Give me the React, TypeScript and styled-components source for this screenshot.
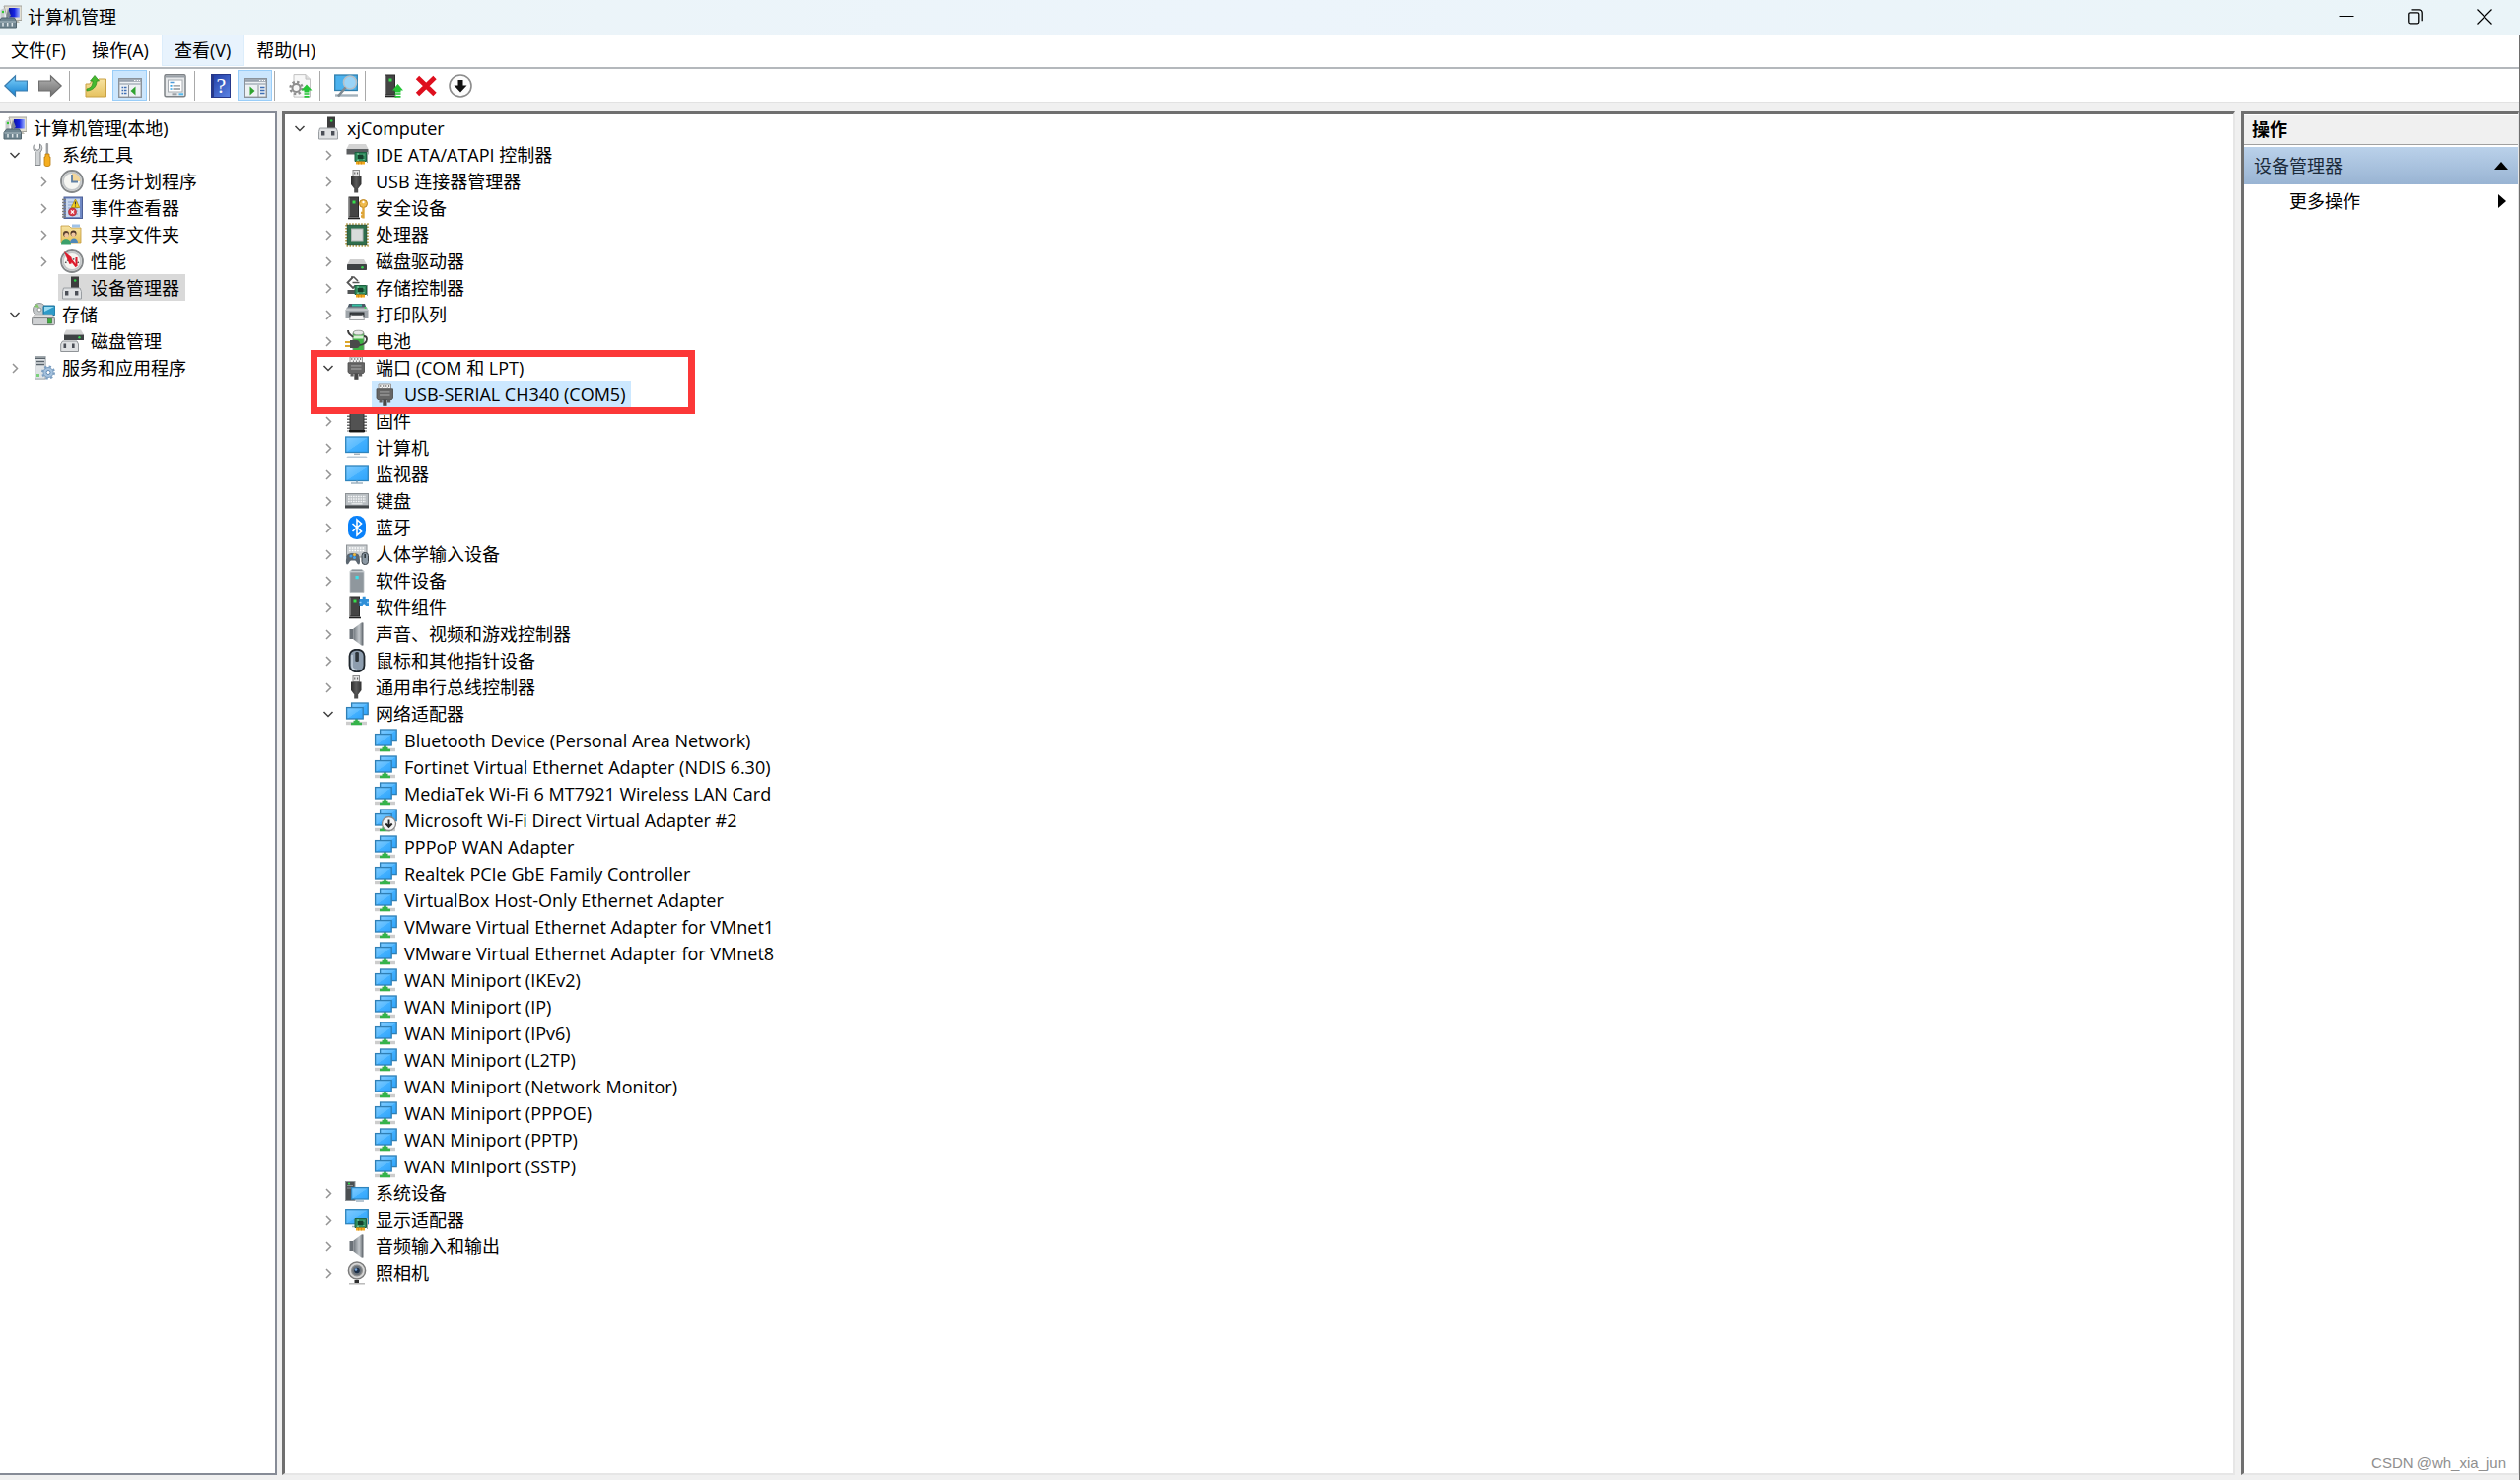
import React from "react";
import styled, { createGlobalStyle, css } from "styled-components";

const GlobalStyle = createGlobalStyle`
  *, *::before, *::after { box-sizing: border-box; }
  html, body { margin: 0; padding: 0; }
  body {
    font-family: "Open Sans", "Noto Sans", "Noto Sans CJK SC", sans-serif;
    font-size: 18px;
    line-height: 26px;
    color: #000;
    background: #f0f0f0;
  }
  button {
    font: inherit;
    color: inherit;
    background: none;
    border: 0;
    padding: 0;
    margin: 0;
    text-align: left;
  }
  svg { display: block; flex: none; }
`;

/* ---------- icons ---------- */

const Svg = styled.svg.attrs({ viewBox: "0 0 24 24", width: 24, height: 24, "aria-hidden": true })``;

const Gradients = styled.svg`
  position: absolute;
  width: 0;
  height: 0;
`;

const Defs = () => (
  <Gradients aria-hidden>
    <defs>
      <linearGradient id="gScreen" x1="0" y1="0" x2="1" y2="1">
        <stop offset="0" stopColor="#7fcaff" />
        <stop offset="0.5" stopColor="#5bbcff" />
        <stop offset="0.52" stopColor="#42b0ff" />
        <stop offset="1" stopColor="#2fa4fb" />
      </linearGradient>
      <linearGradient id="gBack" x1="0" y1="0" x2="0" y2="1">
        <stop offset="0" stopColor="#7fd2fb" />
        <stop offset="1" stopColor="#1580d0" />
      </linearGradient>
      <linearGradient id="gFwd" x1="0" y1="0" x2="0" y2="1">
        <stop offset="0" stopColor="#b5b5b5" />
        <stop offset="1" stopColor="#6f6f6f" />
      </linearGradient>
      <linearGradient id="gDark" x1="0" y1="0" x2="1" y2="0">
        <stop offset="0" stopColor="#2b2b2b" />
        <stop offset="0.5" stopColor="#5a5a5a" />
        <stop offset="1" stopColor="#303030" />
      </linearGradient>
      <linearGradient id="gFolder" x1="0" y1="0" x2="0" y2="1">
        <stop offset="0" stopColor="#f7e3a1" />
        <stop offset="1" stopColor="#e6c25f" />
      </linearGradient>
      <linearGradient id="gSpeaker" x1="0" y1="0" x2="1" y2="0">
        <stop offset="0" stopColor="#70777d" />
        <stop offset="0.6" stopColor="#c3c8cc" />
        <stop offset="1" stopColor="#6b7176" />
      </linearGradient>
      <linearGradient id="gCrt" x1="0" y1="0" x2="1" y2="0">
        <stop offset="0" stopColor="#0a12a8" />
        <stop offset="0.5" stopColor="#1724e0" />
        <stop offset="1" stopColor="#9db2ff" />
      </linearGradient>
    </defs>
  </Gradients>
);

const Card = ({ x = 10, y = 11 }: { x?: number; y?: number }) => (
  <g transform={`translate(${x} ${y})`}>
    <path d="M1 0.5h11.5v9H1z" fill="#2f8a5c" stroke="#1c6140" />
    <path d="M13.5 0v11" stroke="#9aa5a5" />
    <rect x="4" y="3" width="5.5" height="4" fill="#16412c" />
    <path d="M3 2h2M3 8.2h2M10 2.5v1M10 7v1" stroke="#8fd3ab" />
    <rect x="2" y="9.5" width="9" height="3" fill="#f3a81c" />
    <path d="M4.5 9.5v3M7.5 9.5v3" stroke="#c67e10" strokeWidth="0.7" />
  </g>
);

const NetShape = () => (
  <>
    <path d="M1 21.5h21" stroke="#cdcdcd" strokeWidth="3.4" />
    <path d="M11.5 17v3M6 22h11M8.5 20h6" stroke="#35b34a" strokeWidth="2.6" />
    <rect x="6.6" y="1" width="16.6" height="11.6" fill="url(#gScreen)" stroke="#2f7fb5" strokeWidth="1.3" />
    <rect x="1.6" y="5.6" width="16.6" height="11.4" fill="url(#gScreen)" stroke="#2f7fb5" strokeWidth="1.3" />
  </>
);

const UsbShape = () => (
  <>
    <rect x="8" y="0.5" width="6.5" height="6" fill="#e4e4e4" stroke="#8b8b8b" />
    <path d="M9.8 2.5v2M12.6 2.5v2" stroke="#555" />
    <path d="M6 6.5h10.5v8.5l-3 4H9l-3-4z" fill="url(#gDark)" />
    <rect x="9.2" y="18.5" width="4" height="5" fill="#4c4c4c" />
  </>
);

const SerialShape = () => (
  <>
    <path d="M5 1h12.500v6H5z" fill="#f3f3f3" stroke="#9a9a9a" />
    <path d="M6.800 2.200v1.600M9.800 2.200v1.600M12.800 2.200v1.600M15.600 2.200v1.600M8.400 4.600v1.200M11.400 4.600v1.200M14.300 4.600v1.200" stroke="#555" />
    <path d="M3 6.800h16.500V16l-1 1.500h-14.500L3 16z" fill="#666" stroke="#474747" strokeWidth="0.800" />
    <path d="M6 9.800h10.500M6 13h10.500" stroke="#979797" strokeWidth="1.300" />
    <path d="M5.500 17.500h3.200v3H5.500zM14 17.500h3.200v3H14z" fill="#606060" />
    <rect x="9.300" y="17.500" width="4.200" height="6.300" fill="#484848" />
  </>
);

const SpeakerShape = () => (
  <>
    <path d="M4.500 7h4v10h-4z" fill="#6a7177" />
    <path d="M8.500 6.500L16.500 0.500H18v23h-1.500L8.500 17.500z" fill="url(#gSpeaker)" />
    <path d="M18 0.500v23" stroke="#666d73" />
  </>
);

const DriveShape = () => (
  <>
    <path d="M5 10h14l3 5.500H2z" fill="#cfcfcf" />
    <rect x="2" y="15" width="20" height="6" rx="0.8" fill="#3f4244" />
    <circle cx="17.500" cy="18.200" r="1.300" fill="#39d353" />
  </>
);

const TowerShape = ({ x = 3 }: { x?: number }) => (
  <g transform={`translate(${x} 0)`}>
    <rect x="1" y="1" width="9.500" height="20" fill="#444" stroke="#2a2a2a" />
    <path d="M1.500 1.500v19" stroke="#777" />
    <rect x="4.500" y="4.500" width="3" height="3" fill="#35e04b" />
    <path d="M0 22.500h12" stroke="#222" strokeWidth="1.600" />
  </g>
);

const DeviceShape = () => (
  <>
    <rect x="11" y="0.500" width="8" height="12" fill="#3d3d3d" />
    <circle cx="15.200" cy="4.500" r="1.300" fill="#2ed047" />
    <path d="M3.500 12h16.500l1.500 3.500v7.500H2.500v-7.500z" fill="#dfe1e3" stroke="#9a9ea2" />
    <rect x="5" y="15" width="3.400" height="4.500" fill="#4b4f57" />
    <rect x="15" y="15" width="3.400" height="4.500" fill="#4b4f57" />
  </>
);

const ComputerMgmtShape = () => (
  <>
    <path d="M6 1h18v14.500H10z" fill="#e2dfd4" stroke="#a3a39c" />
    <path d="M11 3h11v9.500H11z" fill="url(#gCrt)" />
    <path d="M13 15.500h7l2 2.500H12z" fill="#bdbbb2" />
    <path d="M2.500 5l4-2v10h-4z" fill="#c9ccce" />
    <circle cx="5" cy="7" r="1.200" fill="#31c931" />
    <path d="M10 3l3 8-5 3z" fill="#7e8994" />
    <path d="M3.500 13h13l2 3.500V23H1v-6.500z" fill="#6f8590" stroke="#51646e" />
    <path d="M1.500 17h16.500" stroke="#aebdc4" />
    <path d="M5 18v3.500M9.700 18v3.500M14.300 18v3.500" stroke="#dfe6e9" strokeWidth="1.500" />
  </>
);

const ClockFace = ({ children }: { children?: React.ReactNode }) => (
  <>
    <circle cx="12" cy="12" r="11" fill="#f6f6f2" stroke="#85888a" strokeWidth="1.800" />
    <circle cx="12" cy="12" r="9" fill="none" stroke="#c4c7c9" strokeWidth="1.800" />
    {children}
  </>
);

const consoleWindow = (
  <>
    <rect x="0.700" y="4.700" width="22.600" height="18.600" fill="#eef1f4" stroke="#8b929a" strokeWidth="1.400" />
    <path d="M1 6.500h22" stroke="#98a2ad" strokeWidth="2.600" />
    <path d="M16 6.500h1.500M18.700 6.500h1.500M21 6.500h1" stroke="#fff" strokeWidth="1.200" />
    <path d="M1 10h22" stroke="#a9b2bc" strokeWidth="1.500" />
  </>
);

const shapes: Record<string, React.ReactNode> = {
  mgmt: <ComputerMgmtShape />,
  device: <DeviceShape />,
  tools: (
    <>
      <path d="M3.500 1v4.500l2.500 2 2.500-2V1c2.500 1.200 3.200 5.500 0.500 8v13.500H4V9C1 6.500 1.300 2.500 3.500 1z" fill="#cfd2d4" stroke="#85898c" />
      <path d="M15 0.500h1.600v11H15z" fill="#a9adb0" stroke="#7c8083" strokeWidth="0.600" />
      <path d="M14 11h4v3h1v8c0 2-6 2-6 0v-8h1z" fill="#f5ae1f" stroke="#b87a0d" strokeWidth="0.800" />
    </>
  ),
  clock: (
    <ClockFace>
      <path d="M12 12V3.500A8.500 8.500 0 0 1 20.500 12z" fill="#f3d69a" />
      <path d="M12 5v7.500h6" stroke="#5f7fa3" strokeWidth="1.800" fill="none" />
    </ClockFace>
  ),
  event: (
    <>
      <rect x="4" y="1" width="18.500" height="21.500" fill="#6f88c4" stroke="#4c5f96" />
      <rect x="6" y="2.500" width="14" height="18.500" fill="#c9d8ee" />
      <path d="M8 6h10M8 9h10M8 12h10M8 15h10M8 18h10" stroke="#8ba3cf" />
      <path d="M2 3.500h4M2 6.500h4M2 9.500h4M2 12.500h4M2 15.500h4M2 18.500h4M2 21h4" stroke="#7b7b7b" strokeWidth="1.500" />
      <path d="M15.500 3l4.300 8.500h-8.600z" fill="#f6d21c" stroke="#a88c0d" strokeWidth="0.800" />
      <path d="M15.500 5.500v3M15.500 9.500v1" stroke="#333" strokeWidth="1.200" />
      <circle cx="12.500" cy="16" r="4" fill="#db3c4a" stroke="#a82530" strokeWidth="0.700" />
      <path d="M10.900 14.400l3.200 3.200M14.100 14.400l-3.200 3.200" stroke="#fff" strokeWidth="1.300" />
    </>
  ),
  share: (
    <>
      <path d="M1 3h8l2 2h10v15H1z" fill="url(#gFolder)" stroke="#c39b3c" strokeWidth="0.800" />
      <rect x="12" y="1.500" width="8" height="3" fill="#9fc2e8" />
      <circle cx="6" cy="11" r="3" fill="#5a4030" />
      <circle cx="6.500" cy="12.200" r="2.200" fill="#efc6a0" />
      <path d="M1 21.500c0-7 10-7 10 0z" fill="#3ba06b" />
      <circle cx="13.500" cy="10.500" r="3" fill="#4b3427" />
      <circle cx="13.500" cy="11.800" r="2.200" fill="#efc6a0" />
      <path d="M10 20c0-6 8-6 8 0z" fill="#4d87b8" />
    </>
  ),
  perf: (
    <ClockFace>
      <path d="M5.500 14a7 7 0 0 1 13 0" fill="none" stroke="#4a4a4a" strokeWidth="1.500" strokeDasharray="1.600 1.400" />
      <path d="M6.500 5.500l4 3v6zM7 5.500l9.500 12" stroke="#dd1b2c" strokeWidth="2.200" fill="none" />
      <path d="M16.500 8v9" stroke="#dd1b2c" strokeWidth="2" />
    </ClockFace>
  ),
  storage: (
    <>
      <circle cx="8" cy="7" r="6.500" fill="#c5c9cb" stroke="#8f9395" />
      <circle cx="8" cy="7" r="2" fill="#fff" stroke="#8f9395" />
      <path d="M2 4l4-3 2 4z" fill="#86c86c" />
      <rect x="12" y="3" width="12" height="9.500" rx="1" fill="#2f9bc9" stroke="#1d6f98" />
      <path d="M13 4h10l-10 5z" fill="#9adcf2" />
      <path d="M3 12h18l3 4H0z" fill="#e0e0e0" stroke="#adadad" strokeWidth="0.600" />
      <rect x="0.600" y="15.600" width="22.800" height="7" rx="1" fill="#cfd1d3" stroke="#7e8284" />
      <rect x="16.500" y="16.500" width="4" height="4.500" fill="#3fae3f" stroke="#2c6f2c" strokeWidth="0.600" />
    </>
  ),
  diskmgmt: (
    <>
      <path d="M6 0.500h15l3 5H3.500z" fill="#d4d4d4" />
      <rect x="4" y="5.500" width="20" height="5.500" fill="#3f4244" />
      <circle cx="19.500" cy="8.300" r="1.200" fill="#39d353" />
      <path d="M2.500 12h14.500l1.500 3v7.500H0.700V15z" fill="#dfe1e3" stroke="#8f9397" />
      <rect x="3.500" y="14.500" width="2.600" height="4.500" fill="#4b4f57" />
      <rect x="12" y="14.500" width="2.600" height="4.500" fill="#4b4f57" />
    </>
  ),
  services: (
    <>
      <rect x="3.600" y="0.600" width="10.500" height="22.500" fill="#dfe3e6" stroke="#98a0a6" />
      <path d="M4 2.200h10M5 5.500h8M5 8.500h8" stroke="#59636b" strokeWidth="1.500" />
      <rect x="5" y="18" width="3" height="3" fill="#7bd07b" />
      <circle cx="17" cy="16.500" r="5" fill="#a5c2de" stroke="#7c9fc2" />
      <circle cx="17" cy="16.500" r="6" fill="none" stroke="#7c9fc2" strokeWidth="2" strokeDasharray="2.350 2.350" />
      <circle cx="17" cy="16.500" r="2" fill="#fff" stroke="#6189b3" />
    </>
  ),
  ide: (
    <>
      <path d="M4 1h17l2.500 5H1.500z" fill="#d4d4d4" />
      <path d="M1.500 6h22v5.500h-22z" fill="#5a5d5f" />
      <Card x={9} y={9} />
    </>
  ),
  usb: <UsbShape />,
  security: (
    <>
      <TowerShape x={3} />
      <circle cx="18.500" cy="7.500" r="4" fill="#f0bb4c" stroke="#b98320" />
      <circle cx="18.500" cy="6" r="1.200" fill="#fff" />
      <path d="M18.500 11v11.500M18.500 17h-2.500M18.500 20.500h-2.500" stroke="#dda437" strokeWidth="2.400" />
    </>
  ),
  cpu: (
    <>
      <rect x="1.200" y="1.200" width="21.600" height="21.600" fill="none" stroke="#b59a4a" strokeWidth="2" strokeDasharray="1.500 1.500" />
      <rect x="2.300" y="2.300" width="19.400" height="19.400" fill="#2f6e4c" stroke="#1f5237" />
      <rect x="6.500" y="6" width="11.500" height="12" fill="#d9dcdb" stroke="#b3b8b5" />
    </>
  ),
  disk: <DriveShape />,
  storagectl: (
    <>
      <path d="M8 1L2.500 6.500 8 12l2.500-2.500" fill="none" stroke="#555" strokeWidth="1.800" />
      <path d="M6 1h3l4 4M7.500 6.500h7" fill="none" stroke="#555" strokeWidth="1.600" />
      <path d="M2.500 14h9v4h-9z" fill="#505355" />
      <Card x={9} y={9} />
    </>
  ),
  printer: (
    <>
      <path d="M4 1h16l1.500 4h-19z" fill="#4b5966" />
      <path d="M7 2.500h10" stroke="#35c2a2" strokeWidth="2" />
      <path d="M2 4.500h20l1.500 3v8.500H0.500V7.500z" fill="#9fa5aa" />
      <path d="M1 7h22" stroke="#dfe2e4" />
      <path d="M4.500 9.500h15v5h-15z" fill="#2f3336" />
      <path d="M6 12h12l1.500 5.500h-15z" fill="#f4f4f4" stroke="#8a8e91" strokeWidth="0.800" />
      <path d="M6.500 11.500h11" stroke="#3a3e41" strokeWidth="2.400" />
      <circle cx="20.500" cy="5" r="1" fill="#3edb5d" />
    </>
  ),
  battery: (
    <>
      <rect x="8" y="2" width="11" height="21" rx="2.500" fill="#3fb345" stroke="#7d8c7d" />
      <ellipse cx="13.500" cy="3.500" rx="5" ry="2.300" fill="#e7e7e7" stroke="#8b8b8b" strokeWidth="0.700" />
      <path d="M8.500 6.500h10v3h-10z" fill="#d7f0d3" />
      <path d="M3 1c0 5 3 4 5 7M14 16c5 0 8-3 8-6s-2-3-3-3" fill="none" stroke="#3c3c3c" strokeWidth="1.800" />
      <path d="M5 11h7c4 0 4 8 0 8H5z" fill="#4a4a4a" />
      <path d="M0 13h5M0 17h5" stroke="#dba62c" strokeWidth="1.800" />
    </>
  ),
  serial: <SerialShape />,
  firmware: (
    <>
      <path d="M3.500 3.500v19M20.500 3.500v19" stroke="#6f6f6f" strokeWidth="3" strokeDasharray="1.500 1.500" />
      <rect x="5" y="1" width="14" height="22" fill="#525252" stroke="#333" />
      <path d="M4 22h16" stroke="#161616" strokeWidth="2" />
    </>
  ),
  computer: (
    <>
      <rect x="0.700" y="1" width="22.600" height="15.500" fill="url(#gScreen)" stroke="#2f84bd" strokeWidth="1.300" />
      <path d="M9 18.300h6" stroke="#a9b3bb" strokeWidth="1.500" />
      <path d="M2.500 20.500h19l2 2.500h-23z" fill="#bccad6" />
    </>
  ),
  monitor: (
    <>
      <rect x="0.700" y="4" width="22.600" height="14.500" fill="url(#gScreen)" stroke="#2f84bd" strokeWidth="1.300" />
      <path d="M11 19.500h2M6 21h12" stroke="#9fb2c1" strokeWidth="1.500" />
    </>
  ),
  keyboard: (
    <>
      <rect x="0.500" y="4.500" width="23" height="12.500" fill="#b9bec2" stroke="#8d9296" />
      <path d="M3 7.500h18M3 10h18M3 12.500h18" stroke="#f4f5f6" strokeWidth="1.500" strokeDasharray="1.700 0.800" />
      <path d="M6.500 14.800h11" stroke="#f4f5f6" />
      <rect x="0" y="16.500" width="24" height="3" fill="#43474a" />
    </>
  ),
  bluetooth: (
    <>
      <rect x="3" y="0" width="18" height="24" rx="8.500" fill="#0a82fa" />
      <path d="M7.500 8l9 8-4.500 4V4l4.500 4-9 8" fill="none" stroke="#fff" strokeWidth="1.600" />
    </>
  ),
  hid: (
    <>
      <rect x="1.500" y="3" width="20.500" height="12" fill="#c9cdd0" stroke="#8d9296" />
      <path d="M4 6h16M4 8.500h16" stroke="#fff" strokeWidth="1.500" strokeDasharray="1.700 1" />
      <path d="M3 12c2-1.500 8-1.500 10 0 2 1.500 3 10 1 10.500-2 0-2.500-4-4-4H6c-1.500 0-2 4-4 4-2-0.500-1-9 1-10.500z" fill="#5b6670" />
      <circle cx="6" cy="14" r="1.500" fill="#3c9bea" />
      <circle cx="9.500" cy="12.500" r="1.500" fill="#f0b93b" />
      <circle cx="9.500" cy="15.500" r="1.500" fill="#46a5f0" />
      <rect x="17" y="10.500" width="6.500" height="12" rx="3" fill="#8b98a3" stroke="#3c444b" />
      <path d="M20.200 12v4" stroke="#2c3338" strokeWidth="1.500" />
    </>
  ),
  softdev: (
    <>
      <path d="M5 2.500L7 0.500h10l2 2V23.500H5z" fill="#8f979d" stroke="#b9bfc3" strokeWidth="0.800" />
      <path d="M5 2.700h14" stroke="#c8cdd1" strokeWidth="1.300" />
      <rect x="10.500" y="7" width="3.200" height="3.200" fill="#3fe0ea" />
    </>
  ),
  softcomp: (
    <>
      <TowerShape x={4} />
      <path d="M14.500 4h3.200V0.800h3V4h3.300v7h-3.200c0-2-3-2-3 0h-3.300z" fill="#2f8fd8" />
      <path d="M14.500 7.500h2M22 7.500h2" stroke="#8ec9f5" strokeWidth="1.300" />
    </>
  ),
  speaker: <SpeakerShape />,
  mouse: (
    <>
      <rect x="4.500" y="0.800" width="15" height="22.400" rx="6.500" fill="#8d9dae" stroke="#1f262c" strokeWidth="1.800" />
      <path d="M7 6v11c0 3 2 4.500 5 4.500" fill="none" stroke="#c9d5e0" strokeWidth="1.400" />
      <rect x="10.300" y="3" width="3.600" height="10" rx="1.200" fill="#2d3439" />
    </>
  ),
  network: <NetShape />,
  networkOff: (
    <>
      <NetShape />
      <circle cx="15.500" cy="15.500" r="7" fill="#f4f4f4" stroke="#8a8a8a" strokeWidth="1.300" />
      <path d="M15.500 11.500v7M12.300 15.500l3.200 3.300 3.200-3.300" fill="none" stroke="#222" strokeWidth="1.900" />
    </>
  ),
  system: (
    <>
      <rect x="0.500" y="0.500" width="9.500" height="19" fill="#4b4f52" stroke="#8f9498" />
      <path d="M2 4.500h6M2 7h6" stroke="#8b9094" />
      <circle cx="4" cy="2.500" r="1.100" fill="#35e04b" />
      <rect x="6.600" y="6.600" width="16.800" height="11.400" fill="url(#gScreen)" stroke="#2f84bd" strokeWidth="1.300" />
      <path d="M11 20h8" stroke="#9fb2c1" strokeWidth="1.500" />
    </>
  ),
  display: (
    <>
      <rect x="0.700" y="1.700" width="22.600" height="14" fill="url(#gScreen)" stroke="#2f84bd" strokeWidth="1.300" />
      <path d="M7 18.500h6" stroke="#9fb2c1" strokeWidth="1.500" />
      <Card x={9} y={10} />
    </>
  ),
  camera: (
    <>
      <path d="M9.500 19h4.500v3H9.500z" fill="#2e2e2e" />
      <path d="M4 22.800h16" stroke="#b5b5b5" strokeWidth="1.400" />
      <circle cx="12" cy="9.500" r="8.600" fill="#d6d6d6" stroke="#7b7b7b" strokeWidth="1.500" />
      <circle cx="12" cy="9.500" r="5.400" fill="#6b7279" stroke="#909090" strokeWidth="1.200" />
      <circle cx="12" cy="9.500" r="2.800" fill="#1c2f47" />
      <circle cx="11" cy="8.500" r="1.300" fill="#76a3d9" />
    </>
  ),
  back: <path d="M0.800 12L11.500 2v5h12v10h-12v5z" fill="url(#gBack)" stroke="#3b7cae" strokeWidth="1.200" />,
  forward: <path d="M23.200 12L12.500 2v5h-12v10h12v5z" fill="url(#gFwd)" stroke="#6f6f6f" strokeWidth="1.200" />,
  up: (
    <>
      <path d="M2 10h4l2-3h6l1-2h7.500v18H2z" fill="url(#gFolder)" stroke="#c9a144" />
      <path d="M3 15c5-1 6-4 6-8H6.500L11 1.500 15.500 7H13c0 6-4 9.500-10 10z" fill="#45b92f" stroke="#2b8a1c" strokeWidth="0.700" />
    </>
  ),
  tree: (
    <>
      {consoleWindow}
      <path d="M3.500 13.500h5M3.500 16.500h5M3.500 19.500h5" stroke="#3f6fb5" strokeWidth="1.500" strokeDasharray="1.500 0.800 3" />
      <path d="M10.500 11v12" stroke="#8b929a" />
      <path d="M17.500 12.500v9L12.500 17z" fill="#2fa32f" />
    </>
  ),
  actionPane: (
    <>
      {consoleWindow}
      <path d="M17 13.500h4.500M17 16.500h4.500M17 19.500h4.500" stroke="#3f6fb5" strokeWidth="1.500" />
      <path d="M15 11v12" stroke="#8b929a" />
      <path d="M6.500 12.500v9L11.500 17z" fill="#2fa32f" />
    </>
  ),
  props: (
    <>
      <rect x="1" y="0.700" width="21" height="22" rx="1.500" fill="#e6e8ea" stroke="#7e8286" strokeWidth="1.500" />
      <path d="M2 2.500h19.500" stroke="#9aa1a8" strokeWidth="2" />
      <rect x="4.500" y="6" width="14.500" height="12" fill="#fff" stroke="#a6abb0" />
      <path d="M6.500 8.500h4" stroke="#4d9ad8" strokeWidth="1.500" />
      <path d="M6.500 11.800h2M6.500 15h2" stroke="#3aa5e6" strokeWidth="1.700" />
      <path d="M9.500 11.800h7.500M9.500 15h7.500" stroke="#8b9196" strokeWidth="1.300" />
      <path d="M8.500 20.300h5" stroke="#9aa0a5" strokeWidth="2" />
      <path d="M15.500 20.300h4.500" stroke="#54b9ee" strokeWidth="2" />
    </>
  ),
  gearDoc: (
    <>
      <path d="M5 0.600h12l4.500 4.500v18H5z" fill="#f7f7f7" stroke="#c2c2c2" />
      <path d="M17 0.600v4.500h4.500" fill="#ddd" stroke="#c2c2c2" />
      <circle cx="7.500" cy="14" r="6" fill="none" stroke="#8d8d8d" strokeWidth="2.400" strokeDasharray="2.350 2.350" />
      <circle cx="7.500" cy="14" r="4" fill="#f7f7f7" stroke="#8d8d8d" strokeWidth="2" />
      <path d="M18 10.500l5.500 6h-3v2h-5v-2h-3z" fill="#24c436" />
      <path d="M15.500 20h5M15.500 22.800h5" stroke="#24c436" strokeWidth="1.700" />
    </>
  ),
  scan: (
    <>
      <rect x="0.700" y="1" width="22.600" height="15.500" fill="#4cb2ee" stroke="#2f7fae" strokeWidth="1.300" />
      <path d="M1 21.500h23" stroke="#a3b1bb" strokeWidth="2.400" />
      <circle cx="16" cy="8.500" r="6.500" fill="#9bd4f7" stroke="#b5c0c8" strokeWidth="1.600" />
      <path d="M11.500 13.500L4 22.500" stroke="#7f8a92" strokeWidth="2.600" />
    </>
  ),
  update: (
    <g transform="translate(3 0)">
      <TowerShape x={2} />
      <path d="M15.500 10l5.500 6.500h-2.500v2h-6v-2H10z" fill="#24c436" />
      <path d="M12.500 20h6M12.500 22.800h6" stroke="#24c436" strokeWidth="1.700" />
    </g>
  ),
  remove: <path d="M3.500 3.500L21 20.500M21 3.500L3.500 20.500" stroke="#de0f1e" strokeWidth="4.800" />,
  disable: (
    <>
      <circle cx="12" cy="12" r="11" fill="#fdfdfd" stroke="#8c8c8c" strokeWidth="1.600" />
      <path d="M9.500 6h5v5.500h4L12 18.500l-6.500-7h4z" fill="#111" />
    </>
  ),
};

const Icon = ({ name }: { name: string }) => <Svg>{shapes[name]}</Svg>;

const HelpIcon = styled.span`
  display: flex;
  align-items: center;
  justify-content: center;
  width: 20px;
  height: 24px;
  border: 1px solid #26388a;
  border-left-width: 3px;
  background: linear-gradient(135deg, #2340a8, #5b83e3);
  color: #fff;
  font: 22px/22px "Liberation Serif", serif;
`;

/* ---------- window chrome ---------- */

const Window = styled.div`
  position: relative;
  display: flex;
  flex-direction: column;
  min-height: 100vh;
  overflow: hidden;
`;

const TitleBar = styled.header`
  display: flex;
  align-items: center;
  height: 35px;
  padding: 0 1px 2px 0;
  background: linear-gradient(90deg, #ebf4f7, #ecf4fb 50%, #eaf4f8);
  white-space: nowrap;
`;

const TitleIcon = styled.span`
  margin: 0 6px 0 -2px;
`;

const Title = styled.h1`
  flex: 1;
  margin: 0;
  font-size: 18px;
  font-weight: 400;
`;

const Caption = styled.button`
  display: flex;
  align-items: center;
  justify-content: center;
  width: 70px;
  height: 33px;
`;

const Body = styled.div`
  display: flex;
  flex: 1;
  flex-direction: column;
  border-right: 1px solid #6e6e6e;
`;

const MenuBar = styled.nav`
  display: flex;
  height: 33px;
  padding-bottom: 1px;
  background: #fff;
`;

const MenuItem = styled.button<{ $hot?: boolean }>`
  padding: 0 12px;
  border: 1px solid transparent;
  ${(p) => p.$hot && css`
    background: #e8f3fd;
    border-color: #dcedfb;
  `}
  &:first-child { margin-left: -2px; }
`;

const ToolBar = styled.div`
  display: flex;
  height: 36px;
  padding: 1px 0;
  border-top: 2px solid #b4b8bc;
  border-bottom: 1px solid #e2e2e2;
  background: #fff;
`;

const ToolButton = styled.button<{ $on?: boolean }>`
  display: flex;
  align-items: center;
  justify-content: center;
  width: 35px;
  border: 1px solid ${(p) => (p.$on ? "#99cdf8" : "transparent")};
  background: ${(p) => (p.$on ? "#cce6fd" : "transparent")};
  &:first-child { margin-left: -2px; }
`;

const Divider = styled.span`
  width: 1px;
  margin: 1px 8px 0 2px;
  background: #a9a9a9;
`;

const Panes = styled.main`
  display: grid;
  flex: 1;
  grid-template-columns: 281px minmax(0, 1fr) 283px;
  column-gap: 5px;
  padding: 9px 0 5px;
`;

const ConsolePane = styled.section`
  padding: 1px 0 0 1px;
  background: #fff;
  border: solid #868b96;
  border-width: 2px 2px 2px 0;
`;

const DevicePane = styled.section`
  padding-left: 1px;
  background: #fff;
  border: 3px solid #6f6f6f;
  border-right: 2px solid #e6e6e6;
  border-bottom: 2px solid #e6e6e6;
`;

const ActionPane = styled.aside`
  display: flex;
  flex-direction: column;
  margin-left: 1px;
  background: #fff;
  border: 3px solid #6f6f6f;
  border-right: 1px solid #e6e6e6;
  border-bottom: 2px solid #e6e6e6;
`;

/* ---------- tree ---------- */

const TreeRoot = styled.ul`
  margin: 0;
  padding: 0;
  list-style: none;
`;

const Branch = styled(TreeRoot)`
  padding-left: 29px;
`;

const Row = styled.div`
  display: flex;
  height: 27px;
`;

const Toggle = styled.button`
  display: flex;
  align-items: center;
  justify-content: center;
  width: 29px;
  padding-right: 2px;
`;

const NoToggle = styled.span`
  width: 29px;
`;

const NodeButton = styled.button<{ $tone?: "grey" | "blue" }>`
  display: flex;
  align-items: center;
  gap: 7px;
  padding: 0 6px 0 2px;
  white-space: nowrap;
  ${(p) => p.$tone === "grey" && css`background: #d9d9d9;`}
  ${(p) => p.$tone === "blue" && css`background: #cce8ff;`}
`;

const NodeItem = styled.li<{ $marked?: boolean }>`
  ${(p) => p.$marked && css`
    position: relative;
    &::after {
      content: "";
      position: absolute;
      z-index: 1;
      top: -4px;
      bottom: -7px;
      left: -4px;
      width: 390px;
      border: 7px solid #fc3838;
      pointer-events: none;
    }
  `}
`;

const Chevron = ({ open }: { open?: boolean }) => (
  <svg width="12" height="12" viewBox="0 0 12 12" fill="none" aria-hidden>
    {open ? (
      <path d="M1.500 4L6 8.500 10.500 4" stroke="#404040" strokeWidth="1.500" />
    ) : (
      <path d="M4 2l4.500 4.500L4 11" stroke="#949494" strokeWidth="1.500" />
    )}
  </svg>
);

type Node = {
  label: string;
  icon: string;
  open?: boolean;
  leaf?: boolean;
  tone?: "grey" | "blue";
  marked?: boolean;
  children?: Node[];
};

const TreeNode = ({ node, flush }: { node: Node; flush?: boolean }) => {
  const Group = flush ? TreeRoot : Branch;
  return (
    <NodeItem $marked={node.marked} role="treeitem" aria-expanded={node.leaf ? undefined : !!node.open}>
      <Row>
        {flush ? null : node.leaf ? (
          <NoToggle />
        ) : (
          <Toggle aria-label={node.label}>
            <Chevron open={node.open} />
          </Toggle>
        )}
        <NodeButton $tone={node.tone}>
          <Icon name={node.icon} />
          <span>{node.label}</span>
        </NodeButton>
      </Row>
      {node.children && (
        <Group role="group">
          {node.children.map((c) => (
            <TreeNode key={c.label} node={c} />
          ))}
        </Group>
      )}
    </NodeItem>
  );
};

const consoleTree: Node = {
  label: "计算机管理(本地)",
  icon: "mgmt",
  open: true,
  children: [
    {
      label: "系统工具",
      icon: "tools",
      open: true,
      children: [
        { label: "任务计划程序", icon: "clock" },
        { label: "事件查看器", icon: "event" },
        { label: "共享文件夹", icon: "share" },
        { label: "性能", icon: "perf" },
        { label: "设备管理器", icon: "device", leaf: true, tone: "grey" },
      ],
    },
    {
      label: "存储",
      icon: "storage",
      open: true,
      children: [{ label: "磁盘管理", icon: "diskmgmt", leaf: true }],
    },
    { label: "服务和应用程序", icon: "services" },
  ],
};

const adapter = (label: string, icon = "network"): Node => ({ label, icon, leaf: true });

const deviceTree: Node = {
  label: "xjComputer",
  icon: "device",
  open: true,
  children: [
    { label: "IDE ATA/ATAPI 控制器", icon: "ide" },
    { label: "USB 连接器管理器", icon: "usb" },
    { label: "安全设备", icon: "security" },
    { label: "处理器", icon: "cpu" },
    { label: "磁盘驱动器", icon: "disk" },
    { label: "存储控制器", icon: "storagectl" },
    { label: "打印队列", icon: "printer" },
    { label: "电池", icon: "battery" },
    {
      label: "端口 (COM 和 LPT)",
      icon: "serial",
      open: true,
      marked: true,
      children: [{ label: "USB-SERIAL CH340 (COM5)", icon: "serial", leaf: true, tone: "blue" }],
    },
    { label: "固件", icon: "firmware" },
    { label: "计算机", icon: "computer" },
    { label: "监视器", icon: "monitor" },
    { label: "键盘", icon: "keyboard" },
    { label: "蓝牙", icon: "bluetooth" },
    { label: "人体学输入设备", icon: "hid" },
    { label: "软件设备", icon: "softdev" },
    { label: "软件组件", icon: "softcomp" },
    { label: "声音、视频和游戏控制器", icon: "speaker" },
    { label: "鼠标和其他指针设备", icon: "mouse" },
    { label: "通用串行总线控制器", icon: "usb" },
    {
      label: "网络适配器",
      icon: "network",
      open: true,
      children: [
        adapter("Bluetooth Device (Personal Area Network)"),
        adapter("Fortinet Virtual Ethernet Adapter (NDIS 6.30)"),
        adapter("MediaTek Wi-Fi 6 MT7921 Wireless LAN Card"),
        adapter("Microsoft Wi-Fi Direct Virtual Adapter #2", "networkOff"),
        adapter("PPPoP WAN Adapter"),
        adapter("Realtek PCIe GbE Family Controller"),
        adapter("VirtualBox Host-Only Ethernet Adapter"),
        adapter("VMware Virtual Ethernet Adapter for VMnet1"),
        adapter("VMware Virtual Ethernet Adapter for VMnet8"),
        adapter("WAN Miniport (IKEv2)"),
        adapter("WAN Miniport (IP)"),
        adapter("WAN Miniport (IPv6)"),
        adapter("WAN Miniport (L2TP)"),
        adapter("WAN Miniport (Network Monitor)"),
        adapter("WAN Miniport (PPPOE)"),
        adapter("WAN Miniport (PPTP)"),
        adapter("WAN Miniport (SSTP)"),
      ],
    },
    { label: "系统设备", icon: "system" },
    { label: "显示适配器", icon: "display" },
    { label: "音频输入和输出", icon: "speaker" },
    { label: "照相机", icon: "camera" },
  ],
};

/* ---------- action pane ---------- */

const ActionHeading = styled.h2`
  margin: 1px 0 2px;
  padding: 0 8px 1px;
  font-size: 18px;
  font-weight: 700;
  line-height: 28px;
  background: #f0f0f0;
  border-bottom: 1px solid #a0a0a0;
`;

const ActionGroup = styled.button`
  display: flex;
  align-items: center;
  justify-content: space-between;
  height: 38px;
  padding: 0 10px;
  color: #1b2a3a;
  background: linear-gradient(#bad1ea, #99b4d3);
`;

const ActionItem = styled.button`
  display: flex;
  align-items: center;
  justify-content: space-between;
  height: 34px;
  padding: 0 12px 0 46px;
`;

const Watermark = styled.div`
  position: absolute;
  right: 14px;
  bottom: 5px;
  color: #8f8f8f;
  font: 15px/24px "Liberation Sans", sans-serif;
`;

const tools: Array<{ icon?: string; label?: string; on?: boolean }> = [
  { icon: "back", label: "后退" },
  { icon: "forward", label: "前进" },
  {},
  { icon: "up", label: "向上一级" },
  { icon: "tree", label: "显示/隐藏控制台树", on: true },
  {},
  { icon: "props", label: "属性" },
  {},
  { icon: "help", label: "帮助" },
  { icon: "actionPane", label: "显示/隐藏操作窗格", on: true },
  {},
  { icon: "gearDoc", label: "更新驱动程序" },
  {},
  { icon: "scan", label: "扫描检测硬件改动" },
  {},
  { icon: "update", label: "启用设备" },
  { icon: "remove", label: "卸载设备" },
  { icon: "disable", label: "禁用设备" },
];

const menus = ["文件(F)", "操作(A)", "查看(V)", "帮助(H)"];

export default function App() {
  return (
    <Window>
      <GlobalStyle />
      <Defs />
      <TitleBar>
        <TitleIcon>
          <Icon name="mgmt" />
        </TitleIcon>
        <Title>计算机管理</Title>
        <Caption aria-label="最小化">
          <svg width="16" height="16" viewBox="0 0 16 16" aria-hidden>
            <path d="M0.500 7.500h15" stroke="#000" />
          </svg>
        </Caption>
        <Caption aria-label="还原">
          <svg width="16" height="16" viewBox="0 0 16 16" fill="none" stroke="#000" strokeWidth="1.300" aria-hidden>
            <rect x="0.800" y="3.800" width="11" height="11" rx="1.500" />
            <path d="M3.500 0.800h8.700a3 3 0 0 1 3 3v8.500" />
          </svg>
        </Caption>
        <Caption aria-label="关闭">
          <svg width="16" height="16" viewBox="0 0 16 16" aria-hidden>
            <path d="M0.500 0.500l15 15M15.500 0.500l-15 15" stroke="#000" strokeWidth="1.200" />
          </svg>
        </Caption>
      </TitleBar>
      <Body>
        <MenuBar>
          {menus.map((m, i) => (
            <MenuItem key={m} $hot={i === 2}>
              {m}
            </MenuItem>
          ))}
        </MenuBar>
        <ToolBar role="toolbar">
          {tools.map((t, i) =>
            t.icon ? (
              <ToolButton key={i} $on={t.on} aria-label={t.label}>
                {t.icon === "help" ? <HelpIcon>?</HelpIcon> : <Icon name={t.icon} />}
              </ToolButton>
            ) : (
              <Divider key={i} />
            )
          )}
        </ToolBar>
        <Panes>
          <ConsolePane>
            <TreeRoot role="tree">
              <TreeNode node={consoleTree} flush />
            </TreeRoot>
          </ConsolePane>
          <DevicePane>
            <TreeRoot role="tree">
              <TreeNode node={deviceTree} />
            </TreeRoot>
          </DevicePane>
          <ActionPane>
            <ActionHeading>操作</ActionHeading>
            <ActionGroup>
              设备管理器
              <svg width="14" height="8" viewBox="0 0 14 8" aria-hidden>
                <path d="M0 8l7-8 7 8z" />
              </svg>
            </ActionGroup>
            <ActionItem>
              更多操作
              <svg width="8" height="14" viewBox="0 0 8 14" aria-hidden>
                <path d="M0 0l8 7-8 7z" />
              </svg>
            </ActionItem>
          </ActionPane>
        </Panes>
      </Body>
      <Watermark>CSDN @wh_xia_jun</Watermark>
    </Window>
  );
}
